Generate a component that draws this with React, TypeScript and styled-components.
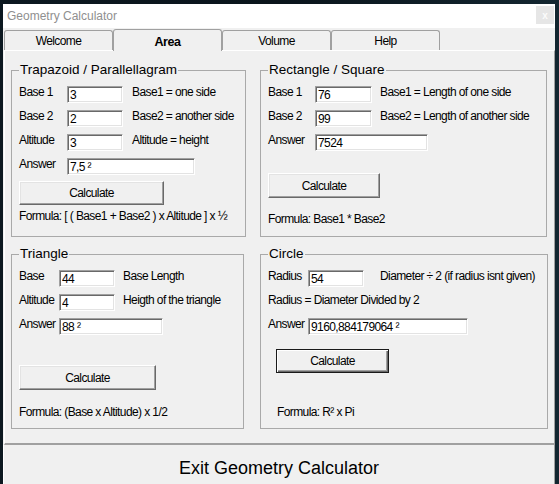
import React from 'react';
import styled, { createGlobalStyle, css } from 'styled-components';

const GlobalStyle = createGlobalStyle`
  html, body { margin: 0; padding: 0; }
  body {
    width: 559px;
    height: 484px;
    overflow: hidden;
    background: #0b161d;
    font-family: "Liberation Sans", Arial, sans-serif;
  }
`;

const uiText = css`
  font-family: "Liberation Sans", Arial, sans-serif;
  font-size: 12px;
  letter-spacing: -0.6px;
  color: #000;
`;

const Desktop = styled.div`
  width: 559px;
  height: 484px;
  box-sizing: border-box;
  padding: 4px 4px 0 3px;
  overflow: hidden;
  background: linear-gradient(90deg, #0c1820 0%, #0a141b 50%, #132630 100%);
`;

const Window = styled.div`
  width: 552px;
  height: 480px;
  background: #f0f0f0;
  display: flex;
  flex-direction: column;
  overflow: hidden;
`;

const TitleBar = styled.div`
  height: 24px;
  flex: none;
  background: #ffffff;
  display: flex;
  align-items: flex-start;
  justify-content: space-between;
  padding: 0 1px 0 4px;
`;

const Title = styled.span`
  font-family: "Liberation Sans", Arial, sans-serif;
  font-size: 12px;
  line-height: 24px;
  color: #8f8f8f;
`;

const CloseBox = styled.div`
  width: 18px;
  height: 18px;
  margin-top: 2px;
  background: #e6e6e6;
  color: #fbfbfb;
  font-family: "Liberation Sans", Arial, sans-serif;
  font-size: 10px;
  font-weight: bold;
  display: flex;
  align-items: center;
  justify-content: center;
`;

const TabStrip = styled.div`
  height: 22px;
  flex: none;
  display: flex;
  align-items: flex-end;
  padding-left: 1px;
`;

const Tab = styled.div<{ $active?: boolean }>`
  width: 109px;
  height: 20px;
  box-sizing: border-box;
  border: 1px solid #a0a0a0;
  border-bottom: none;
  border-radius: 3px 3px 0 0;
  background: #f0f0f0;
  display: flex;
  align-items: center;
  justify-content: center;
  ${uiText};
  ${(p) =>
    p.$active &&
    css`
      height: 22px;
      margin-bottom: -1px;
      position: relative;
      z-index: 1;
      font-weight: bold;
      font-size: 12.5px;
      letter-spacing: -0.4px;
      padding-top: 2px;
    `}
`;

const Panel = styled.div`
  height: 395px;
  flex: none;
  box-sizing: border-box;
  margin-left: 1px;
  border-top: 1px solid #ffffff;
  border-left: 1px solid #ffffff;
  border-right: 1px solid #a0a0a0;
  border-bottom: 2px solid #a0a0a0;
  padding: 11px 0 0 6px;
  display: grid;
  grid-template-columns: 235px 288px;
  grid-template-rows: 175px 183px;
  column-gap: 14px;
  row-gap: 9px;
  align-items: start;
`;

const GroupBox = styled.fieldset<{ $w: number; $h: number }>`
  width: ${(p) => p.$w}px;
  height: ${(p) => p.$h}px;
  box-sizing: border-box;
  margin: 0;
  padding: 4px 0 0 7px;
  border: 1px solid #a9a9a9;
  min-width: 0;
  display: flex;
  flex-direction: column;
`;

const Legend = styled.legend`
  font-family: "Liberation Sans", Arial, sans-serif;
  font-size: 13.5px;
  line-height: 16px;
  color: #000;
  padding: 0 1px;
  margin-left: 0;
`;

const Row = styled.div<{ $top?: number }>`
  height: 24px;
  margin-top: ${(p) => p.$top ?? 0}px;
  display: flex;
  align-items: center;
`;

const Label = styled.span<{ $w: number }>`
  width: ${(p) => p.$w}px;
  flex: none;
  ${uiText};
  line-height: 16px;
  white-space: nowrap;
  padding-bottom: 4px;
`;

const Desc = styled.span<{ $gap: number }>`
  margin-left: ${(p) => p.$gap}px;
  ${uiText};
  line-height: 16px;
  white-space: nowrap;
  padding-bottom: 4px;
`;

const TextBox = styled.input<{ $w: number }>`
  width: ${(p) => p.$w}px;
  height: 17px;
  flex: none;
  box-sizing: border-box;
  margin: 0;
  padding: 2px 0 0 2px;
  background: #ffffff;
  border-style: solid;
  border-width: 1px;
  border-color: #a0a0a0 #ffffff #ffffff #a0a0a0;
  box-shadow: inset 1px 1px 0 #696969, inset -1px -1px 0 #e3e3e3;
  ${uiText};
  line-height: 14px;
  outline: none;
`;

const Note = styled.div<{ $top: number; $indent?: number }>`
  margin-top: ${(p) => p.$top}px;
  margin-left: ${(p) => p.$indent ?? 0}px;
  ${uiText};
  line-height: 16px;
  white-space: nowrap;
`;

const Button = styled.button<{ $w: number; $h: number; $top: number; $indent?: number; $default?: boolean }>`
  width: ${(p) => p.$w}px;
  height: ${(p) => p.$h}px;
  margin: ${(p) => p.$top}px 0 0 ${(p) => p.$indent ?? 0}px;
  flex: none;
  box-sizing: border-box;
  padding: 0;
  background: #f0f0f0;
  ${uiText};
  border-style: solid;
  border-width: 1px;
  ${(p) =>
    p.$default
      ? css`
          border-color: #1a1a1a;
          box-shadow: inset 1px 1px 0 #ffffff, inset -1px -1px 0 #696969, inset -2px -2px 0 #a0a0a0;
        `
      : css`
          border-color: #ffffff #696969 #696969 #ffffff;
          box-shadow: inset -1px -1px 0 #a0a0a0, inset 1px 1px 0 #e3e3e3;
        `}
`;

const ExitButton = styled.button`
  flex: none;
  height: 46px;
  margin: 0;
  padding: 0;
  box-sizing: border-box;
  background: #f0f0f0;
  border: none;
  border-left: 1px solid #ffffff;
  border-right: 1px solid #a0a0a0;
  font-family: "Liberation Sans", Arial, sans-serif;
  font-size: 18px;
  color: #000;
`;

type Field = { label: string; value: string; desc?: string };

const Fields: React.FC<{ fields: Field[]; labelW: number; boxW: number; answerW: number; gap: number }> = ({
  fields,
  labelW,
  boxW,
  answerW,
  gap,
}) => (
  <>
    {fields.map((f) => (
      <Row key={f.label}>
        <Label $w={labelW}>{f.label}</Label>
        <TextBox $w={f.desc === undefined ? answerW : boxW} readOnly value={f.value} />
        {f.desc && <Desc $gap={gap}>{f.desc}</Desc>}
      </Row>
    ))}
  </>
);

export default function App() {
  return (
    <>
      <GlobalStyle />
      <Desktop>
        <Window>
          <TitleBar>
            <Title>Geometry Calculator</Title>
            <CloseBox>x</CloseBox>
          </TitleBar>
          <TabStrip>
            <Tab>Welcome</Tab>
            <Tab $active>Area</Tab>
            <Tab>Volume</Tab>
            <Tab>Help</Tab>
          </TabStrip>
          <Panel>
            <GroupBox $w={235} $h={175}>
              <Legend>Trapazoid / Parallellagram</Legend>
              <Fields
                labelW={48}
                boxW={56}
                answerW={128}
                gap={9}
                fields={[
                  { label: 'Base 1', value: '3', desc: 'Base1 = one side' },
                  { label: 'Base 2', value: '2', desc: 'Base2 = another side' },
                  { label: 'Altitude', value: '3', desc: 'Altitude = height' },
                  { label: 'Answer', value: '7,5 ²' },
                ]}
              />
              <Button $w={145} $h={24} $top={3}>Calculate</Button>
              <Note $top={3}>Formula: [ ( Base1 + Base2 ) x Altitude ] x ½</Note>
            </GroupBox>

            <GroupBox $w={287} $h={175}>
              <Legend>Rectangle / Square</Legend>
              <Fields
                labelW={47}
                boxW={57}
                answerW={113}
                gap={8}
                fields={[
                  { label: 'Base 1', value: '76', desc: 'Base1 = Length of one side' },
                  { label: 'Base 2', value: '99', desc: 'Base2 = Length of another side' },
                  { label: 'Answer', value: '7524' },
                ]}
              />
              <Button $w={112} $h={25} $top={19}>Calculate</Button>
              <Note $top={13}>Formula: Base1 * Base2</Note>
            </GroupBox>

            <GroupBox $w={233} $h={183}>
              <Legend>Triangle</Legend>
              <Fields
                labelW={40}
                boxW={56}
                answerW={104}
                gap={8}
                fields={[
                  { label: 'Base', value: '44', desc: 'Base Length' },
                  { label: 'Altitude', value: '4', desc: 'Heigth of the triangle' },
                  { label: 'Answer', value: '88 ²' },
                ]}
              />
              <Button $w={137} $h={25} $top={27}>Calculate</Button>
              <Note $top={14}>Formula: (Base x Altitude) x 1/2</Note>
            </GroupBox>

            <GroupBox $w={288} $h={183}>
              <Legend>Circle</Legend>
              <Fields
                labelW={40}
                boxW={56}
                answerW={160}
                gap={16}
                fields={[{ label: 'Radius', value: '54', desc: 'Diameter ÷ 2 (if radius isnt given)' }]}
              />
              <Note $top={2}>Radius = Diameter Divided by 2</Note>
              <Row $top={6}>
                <Label $w={40}>Answer</Label>
                <TextBox $w={160} readOnly value="9160,884179064 ²" />
              </Row>
              <Button $w={113} $h={24} $top={11} $indent={8} $default>
                Calculate
              </Button>
              <Note $top={31} $indent={9}>Formula: R² x Pi</Note>
            </GroupBox>
          </Panel>
          <ExitButton>Exit Geometry Calculator</ExitButton>
        </Window>
      </Desktop>
    </>
  );
}
